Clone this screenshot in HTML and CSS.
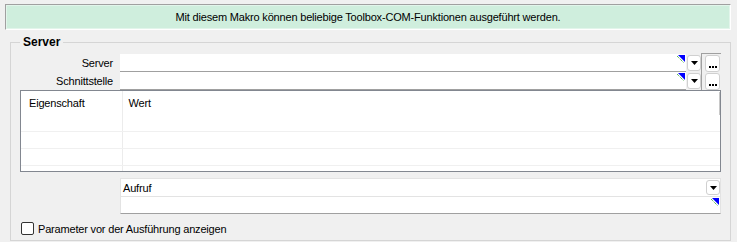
FILE: index.html
```html
<!DOCTYPE html>
<html lang="de">
<head>
  <meta charset="UTF-8">
  <title>Toolbox-COM-Makro</title>
  <link rel="stylesheet" href="styles.css">
</head>
<body>
<div class="banner">Mit diesem Makro können beliebige Toolbox-COM-Funktionen ausgeführt werden.</div>

<div class="group">
  <span class="legend">Server</span>

  <div class="top">
    <div class="rows">
      <div class="row">
        <label class="lbl">Server</label>
        <div class="field">
          <svg class="mark" width="8" height="8" viewBox="0 0 8 8"><polygon points="1,0 8,0 8,7" fill="#0000ff"/><line x1="0" y1="1" x2="7" y2="8" stroke="#1a9c1a" stroke-dasharray="1 1"/></svg>
        </div>
        <button class="drop"><svg width="7" height="4" viewBox="0 0 7 4"><polygon points="0,0 7,0 3.5,4" fill="#000"/></svg></button>
      </div>
      <div class="row">
        <label class="lbl">Schnittstelle</label>
        <div class="field">
          <svg class="mark" width="8" height="8" viewBox="0 0 8 8"><polygon points="1,0 8,0 8,7" fill="#0000ff"/><line x1="0" y1="1" x2="7" y2="8" stroke="#1a9c1a" stroke-dasharray="1 1"/></svg>
        </div>
        <button class="drop"><svg width="7" height="4" viewBox="0 0 7 4"><polygon points="0,0 7,0 3.5,4" fill="#000"/></svg></button>
      </div>
    </div>
    <div class="more-col">
      <button class="more"><span></span><span></span><span></span></button>
      <button class="more"><span></span><span></span><span></span></button>
    </div>
  </div>

  <div class="grid">
    <table>
      <tr class="head"><td>Eigenschaft</td><td>Wert</td></tr>
      <tr><td></td><td></td></tr>
      <tr><td></td><td></td></tr>
      <tr><td></td><td></td></tr>
      <tr><td></td><td></td></tr>
    </table>
    <div class="scroll"></div>
  </div>

  <div class="call">
    <div class="call-row">
      <span class="call-text">Aufruf</span>
      <button class="drop"><svg width="7" height="4" viewBox="0 0 7 4"><polygon points="0,0 7,0 3.5,4" fill="#000"/></svg></button>
    </div>
    <div class="call-row">
      <svg class="mark" width="8" height="8" viewBox="0 0 8 8"><polygon points="1,0 8,0 8,7" fill="#0000ff"/><line x1="0" y1="1" x2="7" y2="8" stroke="#1a9c1a" stroke-dasharray="1 1"/></svg>
    </div>
  </div>

  <label class="check"><span class="box"></span>Parameter vor der Ausführung anzeigen</label>
</div>
</body>
</html>
```

FILE: styles.css
```css
body {
  margin: 0;
  width: 737px;
  height: 242px;
  overflow: hidden;
  background: #f0f0f0;
  color: #000;
  font-family: 'Liberation Sans', Arial, sans-serif;
  font-size: 11px;
  letter-spacing: -0.18px;
}
.banner {
  margin: 4px 6px 0 5px;
  height: 24px;
  line-height: 24px;
  text-align: center;
  background: #cfeedd;
  border: 1px solid;
  border-color: #a0a0a0 #fff #fff #a0a0a0;
  box-shadow: inset 0 0 0 1px #e2f5eb;
}
.group {
  position: relative;
  margin: 12px 6px 0 10px;
  height: 199px;
  box-sizing: border-box;
  border: 1px solid #d5d5d5;
}
.legend {
  position: absolute;
  top: -8px;
  left: 9px;
  padding: 0 3px;
  background: #f0f0f0;
  font-weight: bold;
  font-size: 12px;
  letter-spacing: 0;
}
.top {
  display: flex;
  margin-top: 11px;
}
.rows { display: flex; flex-direction: column; }
.row {
  display: flex;
  align-items: center;
  height: 18px;
}
.lbl {
  width: 102px;
  margin-right: 7px;
  text-align: right;
}
.field {
  width: 566px;
  height: 17px;
  background: #fff;
  border-bottom: 1px solid #a0a0a0;
  display: flex;
  justify-content: flex-end;
  align-items: flex-start;
}
.mark { margin: 1px 1px 0 0; }
.drop {
  width: 14px;
  height: 16px;
  margin-left: 1px;
  padding: 0;
  border: 1px solid #d0d0d0;
  border-radius: 3px;
  background: #fff;
  display: flex;
  align-items: center;
  justify-content: center;
}
.more-col {
  margin-top: -1px;
  border-top: 1px solid #a0a0a0;
  border-left: 1px solid #a0a0a0;
  padding: 0 1px 0 3px;
  display: flex;
  flex-direction: column;
}
.more {
  width: 15px;
  height: 17px;
  margin-top: 1px;
  padding: 0 0 3px;
  border: 1px solid #d0d0d0;
  border-radius: 3px;
  background: #fff;
  display: flex;
  align-items: flex-end;
  justify-content: center;
  gap: 1px;
}
.more span {
  width: 2px;
  height: 2px;
  background: #000;
}
.grid {
  position: relative;
  margin: 0 9px;
  height: 80px;
  border: 1px solid #828790;
  background: #fff;
  overflow: hidden;
}
.grid table {
  width: 100%;
  border-collapse: collapse;
}
.grid td {
  height: 16px;
  padding: 0;
  border-bottom: 1px solid #f0f0f0;
  border-right: 1px solid #ececec;
}
.grid td:first-child { width: 101px; padding-left: 8px; box-sizing: border-box; }
.grid td:last-child { border-right: none; padding-left: 6px; }
.grid .head td { height: 24px; border-bottom: none; }
.scroll {
  position: absolute;
  right: 0;
  top: 1px;
  width: 1px;
  height: 23px;
  background: #c8c8c8;
}
.call {
  margin: 6px 9px 0 109px;
  border: 1px solid #e3e3e3;
  border-bottom-color: #a0a0a0;
  background: #fff;
}
.call-row {
  height: 17px;
  display: flex;
  align-items: center;
  justify-content: space-between;
  padding-left: 2px;
}
.call-row .drop { height: 15px; }
.call-row + .call-row {
  height: 16px;
  border-top: 1px solid #e3e3e3;
  justify-content: flex-end;
  align-items: flex-start;
}
.check {
  display: flex;
  align-items: center;
  margin: 8px 0 0 10px;
}
.box {
  width: 11px;
  height: 11px;
  margin-right: 4px;
  border: 1px solid #333;
  border-radius: 2px;
  background: #fff;
}
```
